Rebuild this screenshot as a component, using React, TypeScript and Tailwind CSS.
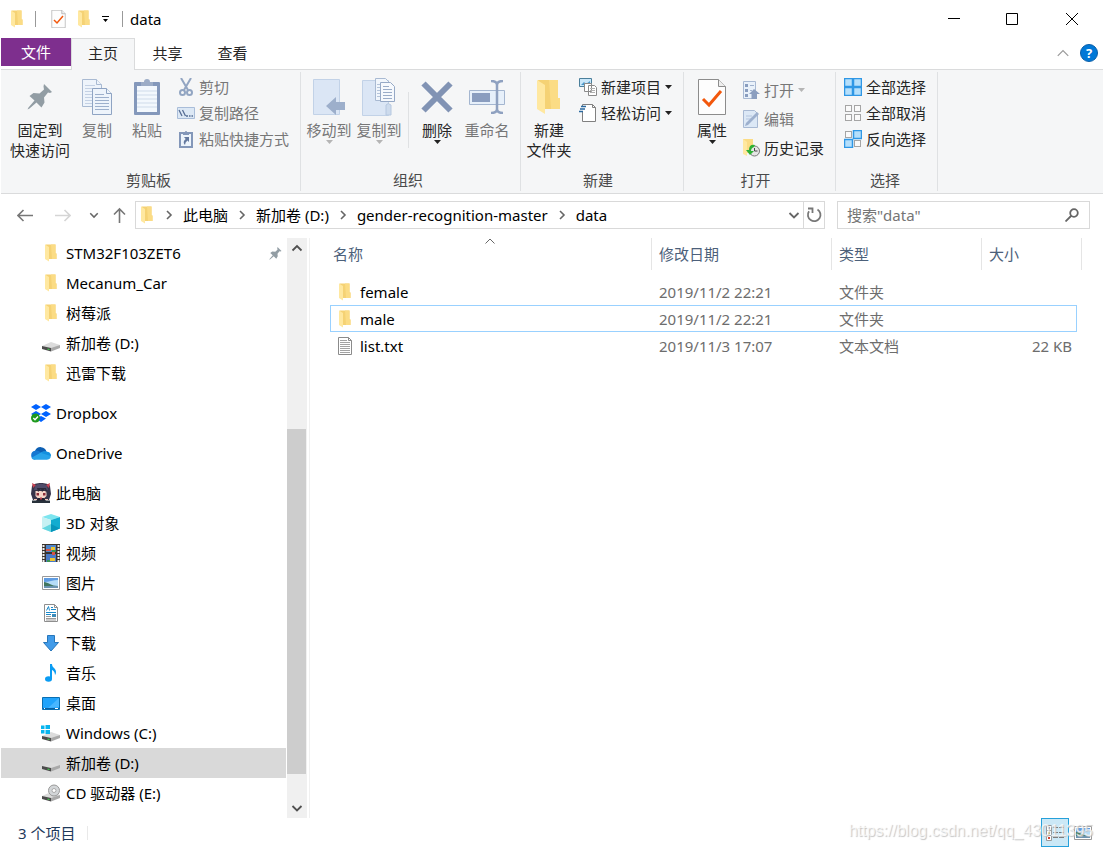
import { useState } from 'react'
import type { ReactNode } from 'react'

type IconName = 'folder' | 'drive' | 'dropbox' | 'onedrive' | 'avatar' | 'cube' | 'video' | 'picture' | 'document' | 'download' | 'music' | 'desktop' | 'windows' | 'disc'

interface NavItem {
  id: string
  label: string
  icon: IconName
  root?: boolean
  pinned?: boolean
}

const NAV_ITEMS: NavItem[] = [
  { id: 'stm', label: 'STM32F103ZET6', icon: 'folder', pinned: true },
  { id: 'mecanum', label: 'Mecanum_Car', icon: 'folder' },
  { id: 'raspberry', label: '树莓派', icon: 'folder' },
  { id: 'quick-d', label: '新加卷 (D:)', icon: 'drive' },
  { id: 'xunlei', label: '迅雷下载', icon: 'folder' },
  { id: 'dropbox', label: 'Dropbox', icon: 'dropbox', root: true },
  { id: 'onedrive', label: 'OneDrive', icon: 'onedrive', root: true },
  { id: 'pc', label: '此电脑', icon: 'avatar', root: true },
  { id: '3d', label: '3D 对象', icon: 'cube' },
  { id: 'video', label: '视频', icon: 'video' },
  { id: 'pictures', label: '图片', icon: 'picture' },
  { id: 'docs', label: '文档', icon: 'document' },
  { id: 'downloads', label: '下载', icon: 'download' },
  { id: 'music', label: '音乐', icon: 'music' },
  { id: 'desktop', label: '桌面', icon: 'desktop' },
  { id: 'c', label: 'Windows (C:)', icon: 'windows' },
  { id: 'd', label: '新加卷 (D:)', icon: 'drive' },
  { id: 'e', label: 'CD 驱动器 (E:)', icon: 'disc' },
]

const FILES = [
  { name: 'female', date: '2019/11/2 22:21', type: '文件夹', size: '' },
  { name: 'male', date: '2019/11/2 22:21', type: '文件夹', size: '' },
  { name: 'list.txt', date: '2019/11/3 17:07', type: '文本文档', size: '22 KB' },
]

const CRUMBS = ['此电脑', '新加卷 (D:)', 'gender-recognition-master', 'data']

function Folder({ className = 'w-3 h-[18px]' }: { className?: string }) {
  return (
    <svg className={className} viewBox="0 0 24 36">
      <path d="M1 1h20v18h2v11H7z" fill="#f5d274" />
      <path d="M12 1h9v18h2v11h-9z" fill="#fbdc85" />
      <path d="M0 1l8 5v29l-8-5z" fill="#ffe8a0" />
    </svg>
  )
}

function Drive() {
  return (
    <>
      <path d="M0 12l9-4 9 3-9 5z" fill="#dcdcdc" />
      <path d="M0 12l9 2v3.5l-9-2.5z" fill="#4c4c4c" />
      <path d="M9 14l9-3v3l-9 3.5z" fill="#a9a9a9" />
      <path d="M5.5 14.5l2 .5v1l-2-.5z" fill="#3ddc4c" />
    </>
  )
}

function NavIcon({ name }: { name: IconName }) {
  if (name === 'folder') {
    return <span className="flex w-[18px] justify-center"><Folder /></span>
  }
  if (name === 'dropbox') {
    return (
      <svg className="size-5" viewBox="0 0 20 20">
        <path d="M5 1l5 3-5 3-5-3zM15 1l5 3-5 3-5-3zM5 8l5 3-5 3-5-3zM15 8l5 3-5 3-5-3zM10 13l5 2.500-5 3.500-5-3.500z" fill="#0062ff" />
        <circle cx="4.500" cy="15" r="4.500" fill="#1f9a1f" />
        <path d="M2.300 15l1.700 1.700 3-3.200" stroke="#fff" strokeWidth="1.400" fill="none" />
      </svg>
    )
  }
  if (name === 'onedrive') {
    return (
      <svg className="size-5" viewBox="0 0 20 20">
        <path d="M4 8a6 6 0 0 1 11.500 1L11 13 4 9z" fill="#0c5fb3" />
        <path d="M4 7.800c2-.8 4 0 6 1.700l-6 7.200A4.500 4.500 0 0 1 4 7.800z" fill="#1477d1" />
        <path d="M9.500 9.700C11 8.500 14 8 15.700 8.700A4 4 0 0 1 16 16.700H4c-2 0-3-1-3.500-2z" fill="#28a3ea" />
        <path d="M10 10c2-1.500 4-1.700 5.700-1.300 2.500.4 4.300 2 4.300 4.200z" fill="#1490df" />
      </svg>
    )
  }
  if (name === 'avatar') {
    return (
      <svg className="size-5" viewBox="0 0 20 20">
        <path d="M1 3c2-4 16-4 18 0l1 8-2 6H2l-2-6z" fill="#37344a" />
        <path d="M4 3c3-3 9-3 12 0l1 4H3z" fill="#4f4c6a" />
        <path d="M4.500 8h11v5l-3 3h-5l-3-3z" fill="#f6d5c8" />
        <path d="M4 8l2-3 1 4 3-3 1 3 3-3 1 4 1-2-1-3H6z" fill="#2c2a3c" />
        <path d="M5.500 10h2.500v2.500H5.500zM12 10h2.500v2.500H12z" fill="#8b2c39" />
        <path d="M1 0l4 2-3 3zM19 0l-4 2 3 3z" fill="#c74152" />
        <path d="M7 15h6l2 3H5z" fill="#222231" />
        <path d="M9 14.500h2v2H9z" fill="#b33c48" />
        <path d="M1 17.500h18V20H1z" fill="#28313b" />
        <path d="M3 16.500h3M14 16.500h3" stroke="#efc3b5" />
      </svg>
    )
  }
  return (
    <svg className="size-[18px] overflow-visible" viewBox="0 0 18 18">
      {name === 'drive' && <Drive />}
      {name === 'cube' && (
        <>
          <path d="M0 3l9-3 9 3-9 3z" fill="#7de5ef" />
          <path d="M0 3l9 3v12l-9-3.500z" fill="#c6f1f3" />
          <path d="M9 6l9-3v11.500L9 18z" fill="#12acd0" />
          <path d="M9 10l9 4.500L9 18z" fill="#0795bb" />
          <path d="M0 14.500L9 10v8z" fill="#65d7e1" />
        </>
      )}
      {name === 'video' && (
        <>
          <path d="M0 0h18v18H0z" fill="#39332e" />
          <path d="M4 1h10v7H4z" fill="#4e85ca" />
          <path d="M4 10h10v8H4z" fill="#4979c6" />
          <path d="M9 3h4v3H9zM8 14h5v3H8z" fill="#ecc431" />
          <path d="M4 5h5v2H4zM10 8h3v3h-3z" fill="#d95245" />
          <path d="M10 6h4v2h-4zM5 16h3v2H5z" fill="#3b9453" />
          <path d="M1.500 1v17M16.500 1v17" stroke="#efefef" strokeWidth="2" strokeDasharray="2 1" />
        </>
      )}
      {name === 'picture' && (
        <>
          <path d="M.5 2.500h17v13H.5z" fill="#fff" stroke="#999" />
          <path d="M2 4h14v10H2z" fill="#b5dcf7" />
          <path d="M2 4h14v2c-5 0-9 2-14 2z" fill="#5f9ce2" />
          <path d="M2 8c4 0 7 4 14 4v1H2z" fill="#41765f" />
          <path d="M2 12h14v2H2z" fill="#6b93b0" />
        </>
      )}
      {name === 'document' && (
        <>
          <path d="M2.500.5h10l3 3v14h-13z" fill="#fff" stroke="#8e8e8e" />
          <path d="M12.500.5v3h3" fill="none" stroke="#8e8e8e" />
          <path d="M4.500 6.500l2-4 1 4" stroke="#1a8acb" fill="none" />
          <path d="M9 3.500h2M9 5.500h5M4 8.500h10M4 10.500h5" stroke="#1a8acb" fill="none" />
          <path d="M10 10h4v3h-4z" fill="#3c8ab7" />
          <path d="M4 12.500h5M4 14.500h10M4 16h10" stroke="#999" />
        </>
      )}
      {name === 'download' && <path d="M5.500 1.500h7v7h4L9 17 1.500 8.500h4z" fill="#419be9" stroke="#2776bb" />}
      {name === 'music' && (
        <>
          <ellipse cx="6.500" cy="15" rx="3.500" ry="2.700" fill="#0a9cf3" />
          <path d="M8 15V0h2c0 4 4 4 4 8 0 2-1 3-1 3 0-4-3-5-3-5v9z" fill="#0a9cf3" />
        </>
      )}
      {name === 'desktop' && (
        <>
          <path d="M.5 3.500h17v12H.5z" fill="#20a3fb" stroke="#096fb3" />
          <path d="M17 4v9L6 14z" fill="#48b6ff" />
          <path d="M1 14.500h16" stroke="#0a60a0" />
          <path d="M2 14.500h1M13 14.500h3" stroke="#fff" />
        </>
      )}
      {name === 'windows' && (
        <>
          <Drive />
          <path d="M-1 1.500h3.500V5H-1zM3.500 1H8v4H3.500zM-1 6h3.500v3.500H-1zM3.500 6H8v4H3.500z" fill="#08b5ef" />
        </>
      )}
      {name === 'disc' && (
        <>
          <Drive />
          <circle cx="12" cy="6.500" r="5.500" fill="#d3d6d8" stroke="#999" />
          <circle cx="12" cy="6.500" r="2" fill="#fff" stroke="#aaa" />
        </>
      )}
    </svg>
  )
}

function Pin({ className }: { className: string }) {
  return (
    <svg className={className} viewBox="0 0 26 26" fill="#929da4">
      <path d="M17 0l8 8-2 1-2-.5-4 5 .5 5-3 5-5-5-7 6-2 1 1-2 6-7-5-4.500 4-3 6 .5 4.500-4-.5-3z" />
    </svg>
  )
}

function Chevron({ d, color = '#666', size = 'size-3', width = 1.8 }: { d: string; color?: string; size?: string; width?: number }) {
  return <svg className={size} viewBox="0 0 12 12" fill="none" stroke={color} strokeWidth={width}><path d={d} /></svg>
}

const UP = 'M1.500 8.500L6 4l4.500 4.500'
const DOWN = 'M1.500 4L6 8.500 10.500 4'
const RIGHT = 'M4 2l4 4-4 4'

function Caret({ muted = false }: { muted?: boolean }) {
  return <svg className="w-[7px] h-1" viewBox="0 0 7 4"><path d="M0 0h7L3.500 4z" fill={muted ? '#b5b5b5' : '#222'} /></svg>
}

function CopyPages({ className }: { className: string }) {
  return (
    <svg className={className} viewBox="0 0 30 36" fill="#eef4fb" stroke="#a9bad2">
      <path d="M.5.5h14l5 5v22H.5z" />
      <path d="M3 6.500h10M3 9.500h13M3 12.500h13M3 15.500h8M3 18.500h8M3 21.500h8M3 24.500h8" stroke="#c4d1e4" />
      <path d="M14.500.5v5h5" />
      <path d="M10.500 9.500h14l5 5v21h-19z" stroke="#8fa4c3" />
      <path d="M24.500 9.500v5h5" stroke="#8fa4c3" />
      <path d="M13 15.500h9M13 18.500h14M13 21.500h14M13 24.500h14M13 27.500h14M13 30.500h14" stroke="#9db0cc" />
    </svg>
  )
}

function SheetCheck({ className }: { className: string }) {
  return (
    <svg className={className} viewBox="0 0 28 36">
      <path d="M.5.5h20l7 7v28H.5z" fill="#fdfdfd" stroke="#8c8c8c" />
      <path d="M20.500.5v7h7" fill="#eee" stroke="#8c8c8c" />
      <path d="M5 20l6 6 12-14" fill="none" stroke="#f2570c" strokeWidth="3" />
    </svg>
  )
}

function BigButton({ icon, label, caret, muted, wide }: { icon: ReactNode; label: string[]; caret?: boolean; muted?: boolean; wide?: boolean }) {
  return (
    <button className={`flex flex-col items-center pt-0.5 ${wide ? 'w-16' : 'w-[50px]'} ${muted ? 'text-[#777]' : 'text-[#262626]'}`}>
      <span className="flex h-[46px] items-center justify-center">{icon}</span>
      {label.map(l => <span key={l} className="block h-5 whitespace-nowrap">{l}</span>)}
      {caret && <Caret muted={muted} />}
    </button>
  )
}

function SmallButton({ icon, label, caret, muted, tall }: { icon: ReactNode; label: string; caret?: boolean; muted?: boolean; tall?: boolean }) {
  return (
    <button className={`flex items-center gap-1 whitespace-nowrap ${tall ? 'h-[29px]' : 'h-[26px]'} ${muted ? 'text-[#777]' : 'text-[#262626]'}`}>
      <span className="flex w-[18px] justify-center">{icon}</span>
      {label}
      {caret && <Caret muted={muted} />}
    </button>
  )
}

function Group({ title, className, children }: { title: string; className: string; children: ReactNode }) {
  return (
    <section className={`my-0.5 flex shrink-0 flex-col border-r border-[#dfe1e3] pb-px ${className}`}>
      <div className="flex h-[98px] items-start">{children}</div>
      <h2 className="text-center text-[#4a4a4a]">{title}</h2>
    </section>
  )
}

function SelectIcon({ filled }: { filled: boolean[] }) {
  const spots = [[1, 1], [10, 1], [1, 10], [10, 10]]
  return (
    <svg className="size-[18px]" viewBox="0 0 18 18">
      {spots.map(([x, y], i) => filled[i]
        ? <rect key={i} x={x} y={y} width="8" height="8" fill="#b5dffb" stroke="#2f97e5" strokeWidth="1.500" transform="translate(-.5 -.5)" />
        : <rect key={i} x={x} y={y} width="6" height="6" fill="#fafafa" stroke="#a5a5a5" transform="translate(.5 .5)" />)}
    </svg>
  )
}

function Ribbon() {
  return (
    <div className="flex overflow-hidden border-b border-[#dadbdc] bg-[#f5f6f7]">
      <Group title="剪贴板" className="pl-[7px] pr-[11px]">
        <BigButton wide icon={<Pin className="size-[26px]" />} label={['固定到', '快速访问']} />
        <BigButton muted icon={<CopyPages className="w-[30px] h-9" />} label={['复制']} />
        <BigButton muted label={['粘贴']} icon={
          <svg className="w-[26px] h-9" viewBox="0 0 26 36">
            <rect y="3" width="26" height="33" rx="1" fill="#8498bb" />
            <path d="M3 7h20v26H3z" fill="#f3f8fd" />
            <path d="M3 12h20M3 16h20M3 20h20M3 24h20M3 28h20" stroke="#cfdbea" />
            <path d="M7 3h3a3 3 0 0 1 6 0h3v4H7z" fill="#9cacc6" />
          </svg>
        } />
        <div className="ml-[5px] flex flex-col pt-0.5">
          <SmallButton muted label="剪切" icon={
            <svg className="size-[18px]" viewBox="0 0 18 18" fill="none" stroke="#92a5c2" strokeWidth="2">
              <path d="M4 0l7 12M14 0L7 12" />
              <circle cx="5.500" cy="14.500" r="2.500" />
              <circle cx="12.500" cy="14.500" r="2.500" />
            </svg>
          } />
          <SmallButton muted label="复制路径" icon={
            <svg className="w-[18px] h-3" viewBox="0 0 18 12">
              <path d="M.5.5h17v11H.5z" fill="#dce8f5" stroke="#a9bdd9" />
              <path d="M2 3l3 6M5.500 3l3 6M9 9h2M12 9h1.500M14.500 9H16" stroke="#566e94" strokeWidth="1.300" />
            </svg>
          } />
          <SmallButton muted label="粘贴快捷方式" icon={
            <svg className="w-3.5 h-[18px]" viewBox="0 0 14 18">
              <path d="M1 3h12v14H1z" fill="#edf4fb" stroke="#8397b9" strokeWidth="2" />
              <path d="M4 3V2h2a1 1 0 0 1 2 0h2v3H4z" fill="#8397b9" />
              <path d="M5 7h5v5L8.500 10.500Q6 12 6 15q-3-3 .7-6z" fill="#64799f" />
            </svg>
          } />
        </div>
      </Group>

      <Group title="组织" className="pl-[3px] pr-2">
        <BigButton muted caret label={['移动到']} icon={
          <svg className="w-8 h-9" viewBox="0 0 32 36">
            <path d="M.5.5h26v35H.5z" fill="#dbe6f5" stroke="#c2d2e7" />
            <path d="M13 27l10-9v5h9v8h-9v5z" fill="#9dafcb" />
          </svg>
        } />
        <BigButton muted caret label={['复制到']} icon={
          <svg className="w-[34px] h-10" viewBox="0 0 34 40">
            <path d="M.5 3.500h26v35H.5z" fill="#dbe6f5" stroke="#c2d2e7" />
            <path d="M24 38V28q2-3 5 0v10h-5z" fill="#cddbed" stroke="#b6c8e0" />
            <path d="M13.500 1.500h10l4 4v18h-14z" fill="#f1f6fc" stroke="#a9bad2" />
            <path d="M15 7.500h3M15 10.500h3M15 13.500h3M15 16.500h3M15 19.500h3" stroke="#b4c4da" />
            <path d="M18.500 5.500h10l4 4v15h-14z" fill="#f6f9fd" stroke="#96a9c6" />
            <path d="M21 9.500h6M21 12.500h9M21 15.500h9M21 18.500h9M21 21.500h9" stroke="#9aacc8" />
          </svg>
        } />
        <span className="ml-1 mr-[3px] mt-5 h-14 w-px bg-[#dfe1e3]" />
        <BigButton caret label={['删除']} icon={
          <svg className="size-8" viewBox="0 0 32 32"><path d="M2.500 2.500l27 27M29.500 2.500l-27 27" stroke="#8193b4" strokeWidth="6" /></svg>
        } />
        <BigButton muted label={['重命名']} icon={
          <svg className="w-9 h-[34px]" viewBox="0 0 36 34">
            <path d="M.5 10.500h35v14H.5z" fill="#e7f0fa" stroke="#a4b6d0" />
            <path d="M3 13h18v9H3z" fill="#8a9dbf" />
            <path d="M28 3v28M22 1q6 0 6 4 0-4 6-4M22 33q6 0 6-4 0 4 6 4" fill="none" stroke="#8fa1c0" strokeWidth="2.500" />
          </svg>
        } />
      </Group>

      <Group title="新建" className="pl-[3px] pr-[11px]">
        <BigButton icon={<Folder className="w-6 h-9" />} label={['新建', '文件夹']} />
        <div className="ml-[5px] flex flex-col pt-0.5">
          <SmallButton caret label="新建项目" icon={
            <svg className="size-[18px]" viewBox="0 0 18 18">
              <path d="M.5.5h12v8H.5z" fill="#c9e7fa" stroke="#4a7f9b" />
              <path d="M2 7l3-3 2 2 4-3v4z" fill="#4a98cc" />
              <path d="M5.500 5.500h7v8h-7zM9.500 7.500h6l2 2v8h-8z" fill="#fff" stroke="#8a8a8a" />
              <path d="M11 10.500h5M11 12.500h5M11 14.500h5" stroke="#b0b0b0" />
            </svg>
          } />
          <SmallButton caret label="轻松访问" icon={
            <svg className="size-[18px]" viewBox="0 0 18 18">
              <path d="M3.500.5h10l3 3v14h-13z" fill="#fff" stroke="#808080" />
              <path d="M13.500.5v3h3" fill="none" stroke="#808080" />
              <path d="M2 2h6v6H2z" fill="#fff" />
              <path d="M2 2.500h5M1 5h5M0 7.500h4" stroke="#2b6aa0" strokeWidth="1.300" />
            </svg>
          } />
        </div>
      </Group>

      <Group title="打开" className="pl-[3px] pr-[11px]">
        <BigButton caret icon={<SheetCheck className="w-7 h-9" />} label={['属性']} />
        <div className="ml-[5px] flex flex-col pt-[3px]">
          <SmallButton tall muted caret label="打开" icon={
            <svg className="size-[18px]" viewBox="0 0 18 18">
              <path d="M1.500.5h12v17h-12z" fill="#e9f1fa" stroke="#a8b9d3" />
              <path d="M3 3h3v3H3zM3 8h3v3H3zM3 13h3v3H3z" fill="#899dbf" />
              <path d="M8 4.500h4M8 9.500h2" stroke="#a0b2ce" />
              <path d="M12 8l6 5h-3v5H9.500v-5H7z" fill="#8b9ebf" />
            </svg>
          } />
          <SmallButton tall muted label="编辑" icon={
            <svg className="size-[18px]" viewBox="0 0 18 18">
              <path d="M1.500.5h11l3 3v14h-14z" fill="#dce8f6" stroke="#a8b9d3" />
              <path d="M4 6h6M4 9h5" stroke="#b4c5de" />
              <path d="M3 16l1-3L15 2l2 2L6 15z" fill="#9db0ce" />
            </svg>
          } />
          <SmallButton tall label="历史记录" icon={
            <svg className="size-[18px]" viewBox="0 0 18 18">
              <path d="M1 0h10v14H1z" fill="#fbdc85" />
              <path d="M1 0l4 3v14l-4-2z" fill="#ffe8a0" />
              <circle cx="12.500" cy="12" r="5" fill="#e5e5e5" stroke="#777" />
              <path d="M12.500 9v3h3" fill="none" stroke="#444" />
              <path d="M13 6Q7 5 7 11H4l4 5 4-4H9q0-3 3-4z" fill="#2eb135" />
            </svg>
          } />
        </div>
      </Group>

      <Group title="选择" className="pl-2 pr-[11px]">
        <div className="flex flex-col pt-0.5">
          <SmallButton label="全部选择" icon={<SelectIcon filled={[true, true, true, true]} />} />
          <SmallButton label="全部取消" icon={<SelectIcon filled={[false, false, false, false]} />} />
          <SmallButton label="反向选择" icon={<SelectIcon filled={[false, true, true, false]} />} />
        </div>
      </Group>
    </div>
  )
}

function App() {
  const [activeNav, setActiveNav] = useState('d')
  const [activeFile, setActiveFile] = useState('male')
  const [query, setQuery] = useState('')

  return (
    <div className="flex min-h-screen flex-col bg-white pl-px font-['Noto_Sans','Noto_Sans_CJK_SC',sans-serif] text-[15px] leading-5 text-black">
      <header className="flex h-[38px] items-center justify-between">
        <div className="flex items-center pl-2.5">
          <Folder />
          <span className="ml-3 h-4 w-px bg-[#999]" />
          <button aria-label="属性" className="ml-[15px]"><SheetCheck className="w-[15px] h-[18px]" /></button>
          <button aria-label="新建文件夹" className="ml-3"><Folder /></button>
          <button aria-label="自定义快速访问工具栏" className="ml-3">
            <svg className="w-[7px] h-1.5" viewBox="0 0 7 6"><path d="M0 0h7v1H0zM1 3h5L3.500 6z" /></svg>
          </button>
          <span className="ml-[13px] h-4 w-px bg-[#999]" />
          <h1 className="ml-[7px]">data</h1>
        </div>
        <div className="flex h-full">
          <button aria-label="最小化" className="flex w-[58px] items-center justify-center"><svg className="size-3" viewBox="0 0 12 12"><path d="M0 5.500h12" stroke="#000" /></svg></button>
          <button aria-label="最大化" className="flex w-[58px] items-center justify-center"><svg className="size-3" viewBox="0 0 12 12"><path d="M.5.5h11v11H.5z" fill="none" stroke="#000" /></svg></button>
          <button aria-label="关闭" className="flex w-[62px] items-center justify-center"><svg className="size-3" viewBox="0 0 12 12"><path d="M0 0l12 12M12 0L0 12" stroke="#000" /></svg></button>
        </div>
      </header>

      <nav className="flex h-8 border-b border-[#dadbdc] text-[#262626]">
        <button className="h-7 w-[70px] bg-[#7e2f8e] text-white">文件</button>
        <button className="-mb-px w-16 border-x border-t border-[#dadbdc] bg-[#f5f6f7] pb-[3px]">主页</button>
        <button className="w-[65px] pb-0.5">共享</button>
        <button className="w-[65px] pb-0.5">查看</button>
        <div className="ml-auto flex items-center gap-2.5 pb-0.5 pr-[5px]">
          <button aria-label="最小化功能区"><Chevron d={UP} color="#999" size="size-3.5" width={1} /></button>
          <button className="flex size-[18px] items-center justify-center rounded-full border border-[#0a5ea8] bg-[#0078d7] text-[13px] font-bold text-white">?</button>
        </div>
      </nav>

      <Ribbon />

      <div className="flex items-center gap-3 py-[7px] pr-[13px]">
        <div className="flex min-w-0 flex-1 items-center">
          <div className="flex w-[134px] shrink-0 items-center pl-4">
            <button aria-label="后退"><svg className="size-4" viewBox="0 0 16 16" fill="none" stroke="#777" strokeWidth="1.600"><path d="M16 8.500H1M6.500 3L1 8.500 6.500 14" /></svg></button>
            <button aria-label="前进" className="ml-[22px]"><svg className="size-4" viewBox="0 0 16 16" fill="none" stroke="#d5d5d5" strokeWidth="1.600"><path d="M0 8.500h15M9.500 3L15 8.500 9.500 14" /></svg></button>
            <button aria-label="最近浏览的位置" className="ml-[18px]"><Chevron d={DOWN} size="size-2.5" /></button>
            <button aria-label="上移" className="ml-3"><svg className="size-4" viewBox="0 0 16 16" fill="none" stroke="#777" strokeWidth="1.600"><path d="M8.500 16V2M3 7.500L8.500 2 14 7.500" /></svg></button>
          </div>
          <div className="flex h-7 min-w-0 flex-1 items-center border border-[#d9d9d9] pl-[5px]">
            <Folder />
            <div className="flex min-w-0 flex-1 items-center overflow-hidden pl-0.5">
              {CRUMBS.map(c => (
                <span key={c} className="flex items-center whitespace-nowrap">
                  <span className="flex w-7 justify-center"><Chevron d={RIGHT} size="size-3" width={1.6} /></span>
                  <a href="#">{c}</a>
                </span>
              ))}
            </div>
            <button aria-label="以前的位置" className="px-[3px]"><Chevron d={DOWN} /></button>
            <button aria-label="刷新" className="flex h-full w-[21px] items-center justify-center border-l border-[#d9d9d9]">
              <svg className="size-4" viewBox="0 0 16 16" fill="none" stroke="#777" strokeWidth="1.800"><path d="M11.500 2.500A6.300 6.300 0 1 1 3 4.300M2 1.500h4.500V6" /></svg>
            </button>
          </div>
        </div>
        <label className="flex h-7 w-[253px] items-center border border-[#d9d9d9] pl-[9px] pr-2.5">
          <input
            value={query}
            onChange={e => setQuery(e.target.value)}
            aria-label="搜索"
            placeholder={'搜索"data"'}
            className="min-w-0 flex-1 outline-none placeholder:text-[#757575]"
          />
          <svg className="size-3.5" viewBox="0 0 14 14" fill="none" stroke="#666" strokeWidth="1.800"><circle cx="9" cy="5" r="3.800" /><path d="M6.500 7.500l-6 6" /></svg>
        </label>
      </div>

      <div className="flex flex-1 pt-0.5">
        <nav className="w-[285px] shrink-0">
          {NAV_ITEMS.map(item => (
            <button
              key={item.id}
              onClick={() => setActiveNav(item.id)}
              className={`flex h-[30px] w-full items-center text-left ${item.root ? 'mt-2.5 gap-[5px] pl-[30px]' : 'gap-1.5 pl-[41px]'} ${activeNav === item.id ? 'bg-[#d9d9d9]' : ''}`}
            >
              <NavIcon name={item.icon} />
              <span>{item.label}</span>
              {item.pinned && <Pin className="ml-auto mr-1 size-[13px]" />}
            </button>
          ))}
        </nav>

        <div className="ml-px flex w-5 shrink-0 flex-col bg-[#f0f0f0]">
          <button aria-label="向上滚动" className="flex h-5 items-center justify-center"><Chevron d={UP} color="#505050" /></button>
          <div className="flex flex-1 flex-col">
            <span className="flex-[171]" />
            <span className="mr-px flex-[345] bg-[#cdcdcd]" />
            <span className="flex-[24]" />
          </div>
          <button aria-label="向下滚动" className="flex h-5 items-center justify-center"><Chevron d={DOWN} color="#505050" /></button>
        </div>

        <main className="ml-0.5 min-w-0 flex-1 border-l border-[#f0f0f0] pl-5 pr-[21px]">
          <table className="w-full table-fixed border-separate border-spacing-0">
            <colgroup>
              <col />
              <col className="w-[180px]" />
              <col className="w-[150px]" />
              <col className="w-[95px]" />
              <col className="w-[5px]" />
            </colgroup>
            <thead className="text-left text-[#4c607a]">
              <tr className="h-8">
                <th className="relative border-r border-[#e5e5e5] pl-[3px] font-normal">
                  名称
                  <span className="absolute inset-x-0 top-0 flex justify-center"><svg className="w-2.5 h-1.5" viewBox="0 0 10 6" fill="none" stroke="#666"><path d="M.5 5.500L5 1l4.500 4.500" /></svg></span>
                </th>
                <th className="border-r border-[#e5e5e5] pl-[7px] font-normal">修改日期</th>
                <th className="border-r border-[#e5e5e5] pl-[7px] font-normal">类型</th>
                <th colSpan={2} className="border-r border-[#e5e5e5] pl-[7px] font-normal">大小</th>
              </tr>
            </thead>
            <tbody className="text-[#6d6d6d]">
              <tr className="h-2"><td colSpan={5} /></tr>
              {FILES.map(f => {
                const edge = activeFile === f.name ? 'border-[#99d1ff]' : 'border-transparent'
                return (
                  <tr key={f.name} className="h-[27px]" onClick={() => setActiveFile(f.name)}>
                    <td className={`border-y border-l pl-1.5 text-black ${edge}`}>
                      <span className="flex items-center gap-[7px]">
                        <span className="flex w-4 justify-center">
                          {f.type === '文件夹' ? <Folder /> : (
                            <svg className="w-4 h-[18px]" viewBox="1 0 16 18">
                              <path d="M2.500.5h10l3 3v14h-13z" fill="#fff" stroke="#8b8b8b" />
                              <path d="M12.500.5v3h3" fill="none" stroke="#8b8b8b" />
                              <path d="M4 3.500h7M4 5.500h10M4 7.500h10M4 9.500h10M4 11.500h10M4 13.500h10M4 15.500h10" stroke="#a3a3a3" />
                            </svg>
                          )}
                        </span>
                        {f.name}
                      </span>
                    </td>
                    <td className={`border-y pl-[7px] ${edge}`}>{f.date}</td>
                    <td className={`border-y pl-[7px] ${edge}`}>{f.type}</td>
                    <td className={`border-y border-r pr-1 text-right ${edge}`}>{f.size}</td>
                    <td />
                  </tr>
                )
              })}
            </tbody>
          </table>
        </main>
      </div>

      <footer className="relative flex h-[31px] items-center pb-0.5 pl-[17px] text-[#1e395b]">
        <span>3 个项目</span>
        <span className="ml-3 h-3.5 w-px bg-[#e9e9e9]" />
        <button aria-label="详细信息" className="ml-auto flex h-[29px] w-7 items-center justify-center border border-[#26a0da] bg-[#cbe8f6]">
          <svg className="w-[18px] h-4" viewBox="0 0 18 16">
            <path d="M.5.5h5v5h-5zM.5 5.500h5v5h-5zM.5 10.500h5v5h-5z" fill="#fff" stroke="#999" />
            <path d="M2 2h2v2H2z" fill="#3477b8" />
            <path d="M2 7h2v2H2z" fill="#979c37" />
            <path d="M2 12h2v2H2z" fill="#d43f2f" />
            <path d="M7 2.500h5M13 2.500h5M7 7.500h5M13 7.500h5M7 12.500h5M13 12.500h5" stroke="#777" />
          </svg>
        </button>
        <button aria-label="大缩略图" className="ml-[5px] mr-[11px]"><NavIcon name="picture" /></button>
        <span className="pointer-events-none absolute right-2.5 top-[3px] font-['Liberation_Sans',sans-serif] text-[16px] text-white/70 [text-shadow:1px_1px_1px_#c4c4c4]">https://blog.csdn.net/qq_43011395</span>
      </footer>
    </div>
  )
}

export default App
